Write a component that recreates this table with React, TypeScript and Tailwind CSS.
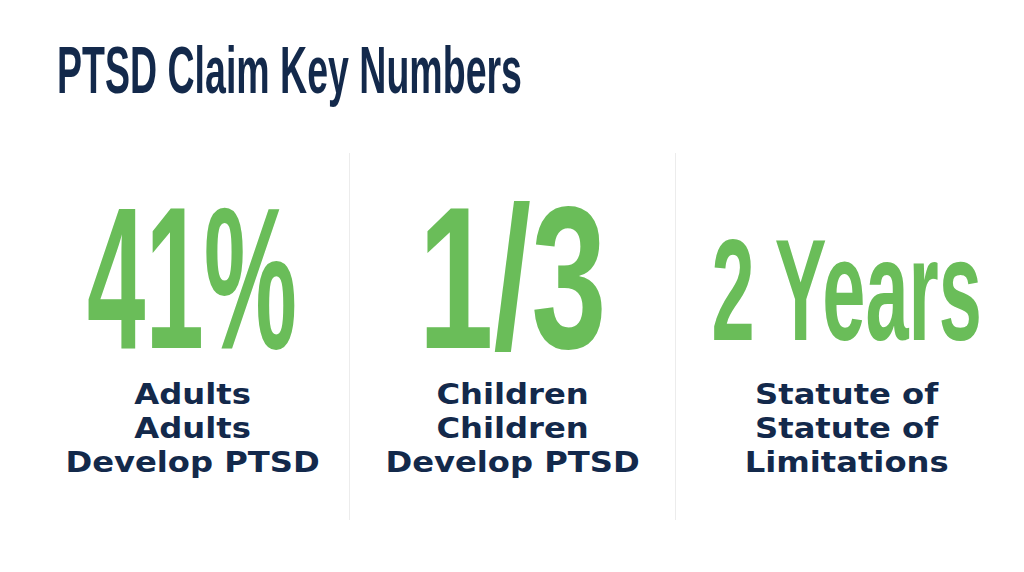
const stats = [
  {
    value: "41%",
    size: "text-[202px] leading-[196px] scale-x-[0.52]",
    lines: ["Adults", "Adults", "Develop PTSD"],
    shift: "pl-[11px]",
  },
  {
    value: "1/3",
    size: "text-[202px] leading-[196px] scale-x-[0.67]",
    lines: ["Children", "Children", "Develop PTSD"],
    shift: "border-l border-[#ececec]",
  },
  {
    value: "2 Years",
    size: "text-[145px] leading-[172px] scale-x-[0.535]",
    lines: ["Statute of", "Statute of", "Limitations"],
    shift: "border-l border-[#ececec] pl-[17px]",
  },
];

const App = () => {
  return (
    <div className="w-full h-[572px] bg-white overflow-hidden">
      {/* Title */}
      <div className="pt-[36px] pl-[57px] h-[103px]">
        <h1 className="inline-block origin-left scale-x-[0.56] whitespace-nowrap text-[67px] leading-[67px] font-bold text-[#13294b] font-['Liberation_Sans',Arial,sans-serif]">
          PTSD Claim Key Numbers
        </h1>
      </div>

      {/* Stats */}
      <div className="mt-[50px] mx-[24px] grid grid-cols-3 h-[367px]">
        {stats.map((s, i) => (
          <div key={i} className={`flex flex-col items-center ${s.shift}`}>
            <div className="h-[223px] w-full flex items-end justify-center">
              <span
                className={`inline-block whitespace-nowrap font-bold text-[#6abd59] font-['Liberation_Sans',Arial,sans-serif] ${s.size}`}
              >
                {s.value}
              </span>
            </div>
            <div className="pt-[2px] text-center text-[28px] leading-[34px] font-bold text-[#13294b] font-['DejaVu_Sans',sans-serif] scale-x-[1.15]">
              {s.lines.map((l, j) => (
                <p key={j} className="whitespace-nowrap">{l}</p>
              ))}
            </div>
          </div>
        ))}
      </div>
    </div>
  );
};

export default App;
